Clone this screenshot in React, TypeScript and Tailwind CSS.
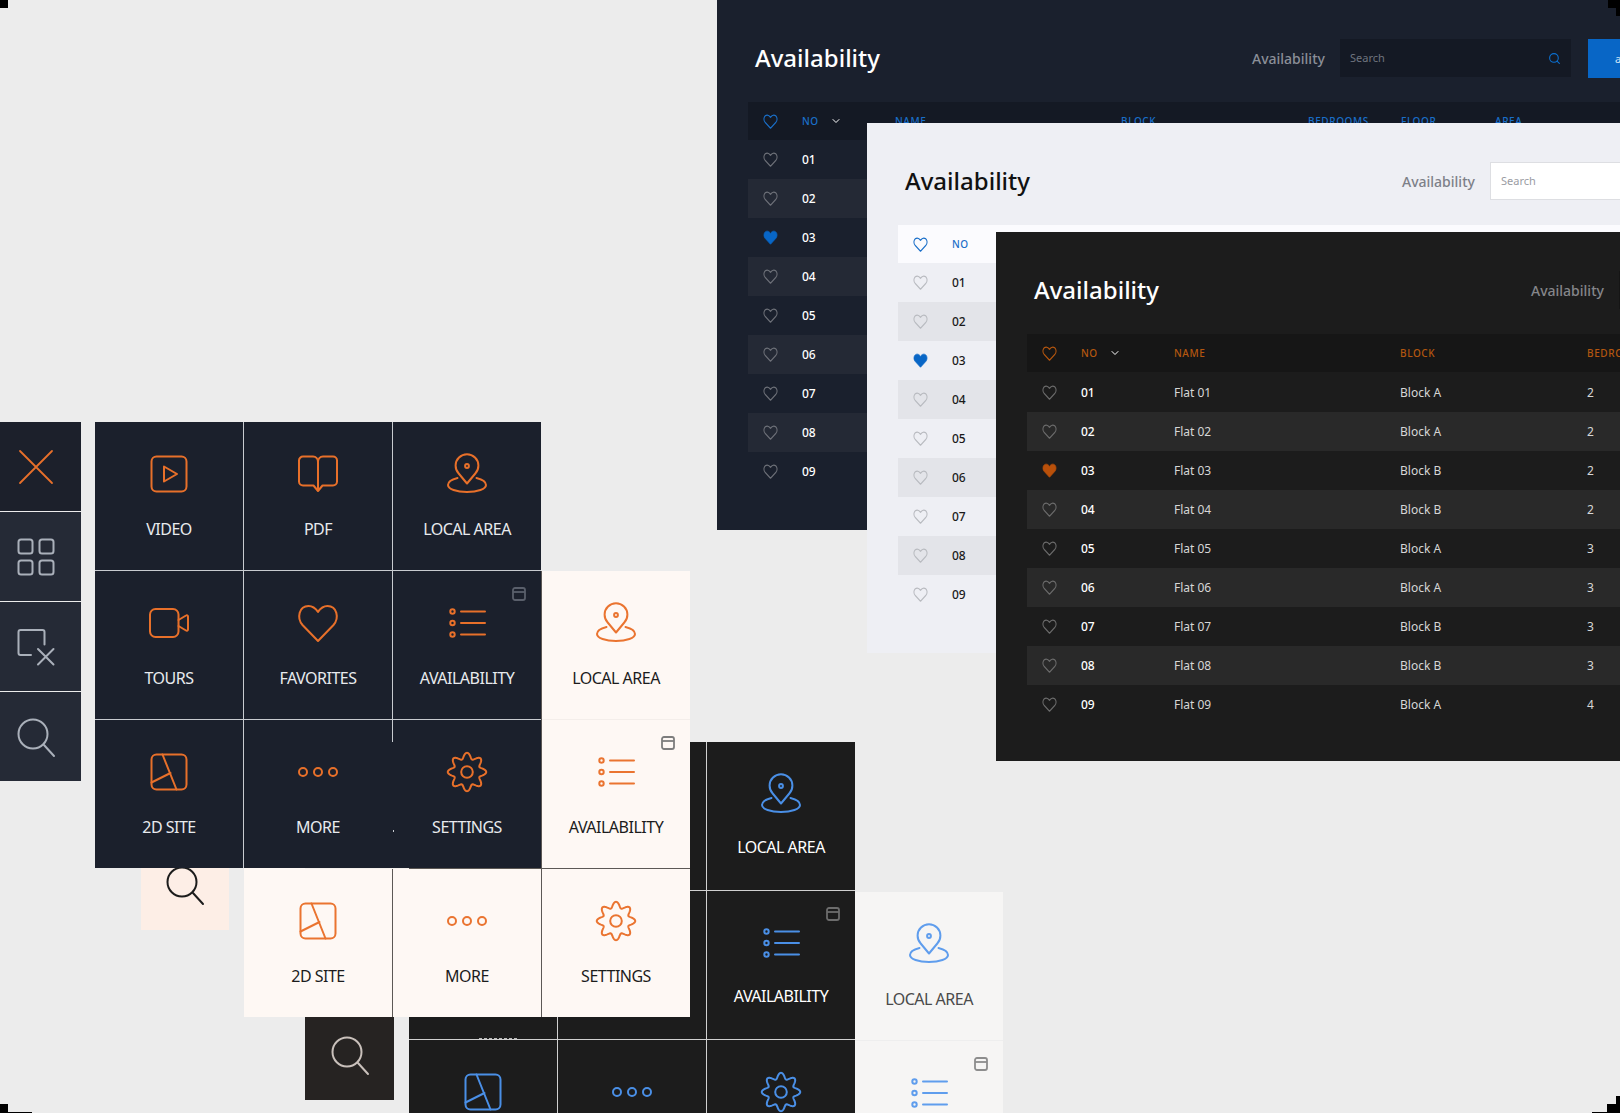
import React from "react";
import { Search, ChevronDown } from "lucide-react";

const FONT = "font-['Noto_Sans','Open_Sans',sans-serif]";

const gearPath = (() => {
  const pts: string[] = [];
  const n = 240;
  for (let i = 0; i < n; i++) {
    const t = (i / n) * Math.PI * 2;
    const r = 16.3 + 2.9 * Math.cos(8 * t);
    const x = 22 + r * Math.sin(t);
    const y = 22 - r * Math.cos(t);
    pts.push(`${i === 0 ? "M" : "L"}${x.toFixed(2)} ${y.toFixed(2)}`);
  }
  return pts.join(" ") + " Z";
})();

type IconName = "video" | "pdf" | "local" | "tours" | "heart" | "list" | "site" | "more" | "gear";

function Icon({ name }: { name: IconName }) {
  return (
    <svg width="44" height="44" viewBox="0 0 44 44" fill="none" stroke="currentColor" strokeWidth="2" strokeLinecap="round" strokeLinejoin="round">
      {name === "video" && (
        <>
          <rect x="4.5" y="4.5" width="35" height="35" rx="5" />
          <path d="M17 14.5 30 22 17 29.5Z" />
        </>
      )}
      {name === "pdf" && (
        <path d="M22 10c0-3-2-5.500-5-5.500H7a4 4 0 0 0-4 4V29.500a4 4 0 0 0 4 4h10.500L22 39l4.500-5.500H37a4 4 0 0 0 4-4V8.500a4 4 0 0 0-4-4H27c-3 0-5 2.500-5 5.500v26" />
      )}
      {name === "local" && (
        <>
          <path d="M22 31.500 13.700 21.500A11.400 11.400 0 1 1 30.300 21.500Z" />
          <circle cx="22" cy="14" r="1.900" />
          <path d="M12.500 26C6.500 27.500 3 30 3 33c0 4 8.500 7 19 7s19-3 19-7c0-3-3.500-5.500-9.500-7" />
        </>
      )}
      {name === "tours" && (
        <>
          <rect x="3" y="8" width="28.500" height="28" rx="5.500" />
          <path d="M31.500 19 39 14.500a1.300 1.300 0 0 1 2 1V28.500a1.300 1.300 0 0 1-2 1L31.500 25" />
        </>
      )}
      {name === "heart" && (
        <path d="M22 40 6.500 24C.5 17 3 5 12.500 5 17 5 20 8 22 11c2-3 5-6 9.500-6C41 5 43.500 17 37.500 24Z" />
      )}
      {name === "list" && (
        <>
          <circle cx="7.500" cy="10.500" r="2.200" />
          <circle cx="7.500" cy="22" r="2.200" />
          <circle cx="7.500" cy="33.500" r="2.200" />
          <path d="M16 10.500H40M16 22H40M16 33.500H40" />
        </>
      )}
      {name === "site" && (
        <>
          <rect x="4.500" y="4.500" width="35" height="35" rx="5" />
          <path d="M15.500 4.500 29.500 39.500M4.500 32.500 23.500 23" />
        </>
      )}
      {name === "more" && (
        <>
          <circle cx="7" cy="22" r="4" />
          <circle cx="22" cy="22" r="4" />
          <circle cx="37" cy="22" r="4" />
        </>
      )}
      {name === "gear" && (
        <>
          <path d={gearPath} />
          <circle cx="22" cy="22" r="5.800" />
        </>
      )}
    </svg>
  );
}

const CELLS: { label: string; icon: IconName; badge?: boolean }[] = [
  { label: "VIDEO", icon: "video" },
  { label: "PDF", icon: "pdf" },
  { label: "LOCAL AREA", icon: "local" },
  { label: "TOURS", icon: "tours" },
  { label: "FAVORITES", icon: "heart" },
  { label: "AVAILABILITY", icon: "list", badge: true },
  { label: "2D SITE", icon: "site" },
  { label: "MORE", icon: "more" },
  { label: "SETTINGS", icon: "gear" },
];

type GridTheme = { pos: string; line: string; cell: string; label: string; icon: string; badge: string };

function MenuGrid({ t }: { t: GridTheme }) {
  return (
    <div className={`absolute ${t.pos} ${t.line} grid grid-cols-[148px_148px_148px] grid-rows-[148px_148px_148px] gap-px`}>
      {CELLS.map((c) => (
        <div key={c.label} className={`relative flex flex-col items-center pt-[30px] ${t.cell}`}>
          <span className={t.icon}>
            <Icon name={c.icon} />
          </span>
          <span className={`text-[16px] tracking-[-0.5px] leading-[22px] ${t.label}`}>{c.label}</span>
          {c.badge && (
            <svg className={`absolute right-[15px] top-[16px] ${t.badge}`} width="14" height="14" viewBox="0 0 14 14" fill="none" stroke="currentColor" strokeWidth="1.800">
              <rect x="1" y="1" width="12" height="12" rx="2" />
              <path d="M1 5H13" />
            </svg>
          )}
        </div>
      ))}
    </div>
  );
}

function SearchGlyph() {
  return (
    <svg width="44" height="44" viewBox="0 0 44 44" fill="none" stroke="currentColor" strokeWidth="2" strokeLinecap="round">
      <circle cx="19" cy="19" r="14.500" />
      <path d="M30 30 40 41" />
    </svg>
  );
}

function RailButton({ className, children }: { className: string; children: React.ReactNode }) {
  return <div className={`flex items-center justify-center ${className}`}>{children}</div>;
}

function Rail() {
  return (
    <div className="absolute left-0 top-[422px] z-40 w-[81px] flex flex-col text-[#aab0ba]">
      <RailButton className="h-[89px] bg-[#1c202b] pr-[9px] mb-px text-[#e8702a]">
        <svg width="44" height="44" viewBox="0 0 44 44" fill="none" stroke="currentColor" strokeWidth="1.800" strokeLinecap="round">
          <path d="M6 6 38 38M38 6 6 38" />
        </svg>
      </RailButton>
      <RailButton className="h-[89px] bg-[#252a36] pr-[9px] mb-px">
        <svg width="44" height="44" viewBox="0 0 44 44" fill="none" stroke="currentColor" strokeWidth="2">
          <rect x="4.500" y="4.500" width="14" height="14" rx="2.500" />
          <rect x="25.500" y="4.500" width="14" height="14" rx="2.500" />
          <rect x="4.500" y="25.500" width="14" height="14" rx="2.500" />
          <rect x="25.500" y="25.500" width="14" height="14" rx="2.500" />
        </svg>
      </RailButton>
      <RailButton className="h-[89px] bg-[#252a36] pr-[9px] mb-px">
        <svg width="44" height="44" viewBox="0 0 44 44" fill="none" stroke="currentColor" strokeWidth="2" strokeLinecap="round" strokeLinejoin="round">
          <path d="M30.500 19.500V7a2 2 0 0 0-2-2H6.500a2 2 0 0 0-2 2v21a2 2 0 0 0 2 2H17" />
          <path d="M24 24 39.500 39.500M39.500 24 24 39.500" />
        </svg>
      </RailButton>
      <RailButton className="h-[89px] bg-[#252a36] pr-[9px]">
        <SearchGlyph />
      </RailButton>
    </div>
  );
}

function Heart({ filled }: { filled?: boolean }) {
  return (
    <svg width="15" height="15" viewBox="0 0 44 40" preserveAspectRatio="none" fill={filled ? "currentColor" : "none"} stroke="currentColor" strokeWidth={filled ? 2 : 3} strokeLinejoin="round">
      <path d="M22 38 6 22C0 15 3 3 12.500 3 17 3 20 6 22 9c2-3 5-6 9.500-6C41 3 44 15 38 22Z" />
    </svg>
  );
}

const ROWS = [
  ["01", "Flat 01", "Block A", "2"],
  ["02", "Flat 02", "Block A", "2"],
  ["03", "Flat 03", "Block B", "2"],
  ["04", "Flat 04", "Block B", "2"],
  ["05", "Flat 05", "Block A", "3"],
  ["06", "Flat 06", "Block A", "3"],
  ["07", "Flat 07", "Block B", "3"],
  ["08", "Flat 08", "Block B", "3"],
  ["09", "Flat 09", "Block A", "4"],
];

const GRID = "grid grid-cols-[39px_93px_226px_187px_93px_94px_120px] items-center pl-[15px]";

type PanelTheme = {
  pos: string;
  bg: string;
  title: string;
  sub: string;
  input: string;
  placeholder: string;
  head: string;
  headText: string;
  stripe: string;
  no: string;
  cell: string;
  heart: string;
  on: string;
  chevron: string;
  rows: string;
};

function Panel({ t }: { t: PanelTheme }) {
  return (
    <section className={`absolute ${t.pos} ${t.bg} w-[1000px] pt-[39px]`}>
      <div className="flex items-center h-[38px] pl-[38px]">
        <h1 className={`w-[497px] text-[24px] leading-[32px] font-medium ${t.title}`}>Availability</h1>
        <span className={`w-[88px] text-[14px] font-medium ${t.sub}`}>Availability</span>
        <div className={`flex items-center justify-between w-[231px] h-[38px] pl-[10px] pr-[10px] ${t.input}`}>
          <span className={`text-[11px] ${t.placeholder}`}>Search</span>
          <Search size={13} className="text-[#0b6fd0]" />
        </div>
        <div className="ml-[17px] w-[120px] h-[39px] pl-[27px] bg-[#0866c6] text-[11px] leading-[39px] text-[#cfe2f7]">add</div>
      </div>
      <div className="ml-[31px] mt-[25px]">
        <div className={`${GRID} h-[38px] ${t.head}`}>
          <span className={`w-[15px] ${t.headText}`}>
            <Heart />
          </span>
          <span className={`flex items-center text-[10px] font-medium tracking-[0.6px] ${t.headText}`}>
            NO
            <ChevronDown size={12} className={`ml-[11px] ${t.chevron}`} />
          </span>
          {["NAME", "BLOCK", "BEDROOMS", "FLOOR", "AREA"].map((h) => (
            <span key={h} className={`text-[10px] font-medium tracking-[0.6px] ${t.headText}`}>
              {h}
            </span>
          ))}
        </div>
        <div className={t.rows}>
          {ROWS.map((r, i) => (
            <div key={r[0]} className={`${GRID} h-[39px] ${i % 2 === 1 ? t.stripe : ""}`}>
              <span className={`w-[15px] ${i === 2 ? t.on : t.heart}`}>
                <Heart filled={i === 2} />
              </span>
              <span className={`text-[12px] font-medium ${t.no}`}>{r[0]}</span>
              <span className={`text-[12px] ${t.cell}`}>{r[1]}</span>
              <span className={`text-[12px] ${t.cell}`}>{r[2]}</span>
              <span className={`text-[12px] ${t.cell}`}>{r[3]}</span>
            </div>
          ))}
        </div>
      </div>
    </section>
  );
}

export default function App() {
  return (
    <div className={`relative w-[1620px] h-[1113px] overflow-hidden bg-[#ececec] ${FONT}`}>
      <Panel
        t={{
          pos: "left-[717px] top-0 h-[530px] z-10",
          bg: "bg-[#1a202d]",
          title: "text-white",
          sub: "text-[#8b8f98]",
          input: "bg-[#141924]",
          placeholder: "text-[#6f747e]",
          head: "bg-[#141924]",
          headText: "text-[#1a6fc9]",
          stripe: "bg-[#242935]",
          no: "text-white",
          cell: "text-[#d8d8d8]",
          heart: "text-[#6d7078]",
          on: "text-[#0866c6]",
          chevron: "text-white",
          rows: "",
        }}
      />
      <Panel
        t={{
          pos: "left-[867px] top-[123px] h-[530px] z-20",
          bg: "bg-[#eeeff4]",
          title: "text-[#111111]",
          sub: "text-[#7d8088]",
          input: "bg-white border border-[#dddee2]",
          placeholder: "text-[#9a9ca3]",
          head: "bg-[#fbfbfe]",
          headText: "text-[#1a6fc9]",
          stripe: "bg-[#e3e4e9]",
          no: "text-[#1a1a1a]",
          cell: "text-[#333333]",
          heart: "text-[#b9bbc0]",
          on: "text-[#0866c6]",
          chevron: "hidden",
          rows: "",
        }}
      />
      <Panel
        t={{
          pos: "left-[996px] top-[232px] h-[529px] z-30",
          bg: "bg-[#1c1c1c]",
          title: "text-white",
          sub: "text-[#85868a]",
          input: "bg-[#151515]",
          placeholder: "text-[#6f6f6f]",
          head: "bg-[#161616]",
          headText: "text-[#b4560f]",
          stripe: "bg-[#292929]",
          no: "text-white",
          cell: "text-[#d6d6d6]",
          heart: "text-[#6b6b6b]",
          on: "text-[#b9500a]",
          chevron: "text-white",
          rows: "mt-px",
        }}
      />

      <div className="z-[1] relative">
        <MenuGrid
          t={{
            pos: "left-[557px] top-[892px]",
            line: "bg-[#eeeeee]",
            cell: "bg-[#f6f5f4]",
            label: "mt-[22px] text-[#4a4a4a]",
            icon: "text-[#5f9ded]",
            badge: "text-[#8d8d8d]",
          }}
        />
        <MenuGrid
          t={{
            pos: "left-[409px] top-[742px]",
            line: "bg-[#d0d0d0]",
            cell: "bg-[#1c1c1c]",
            label: "mt-[20px] text-white",
            icon: "text-[#4a8fe6]",
            badge: "text-[#6c6c6c]",
          }}
        />
        <div className="absolute left-[479px] top-[1038px] w-[38px] border-t border-dashed border-[#bbbbbb]" />
        <RailButton className="absolute left-[305px] top-[1010px] w-[89px] h-[90px] bg-[#262322] text-[#c9c0bb]">
          <SearchGlyph />
        </RailButton>
        <RailButton className="absolute left-[141px] top-[840px] w-[88px] h-[90px] bg-[#fdeee6] text-[#1c1c1c]">
          <SearchGlyph />
        </RailButton>
        <MenuGrid
          t={{
            pos: "left-[244px] top-[571px]",
            line: "bg-[#5c5855]",
            cell: "bg-[#fef8f4]",
            label: "mt-[22px] text-[#1c1c1c]",
            icon: "text-[#ea7430]",
            badge: "text-[#7d7d7d]",
          }}
        />
        <div className="absolute left-[542px] top-[719px] w-[148px] h-px bg-[#f4eeea]" />
        <div className="absolute left-[244px] top-[868px] w-[165px] h-px bg-[#fef8f4]" />
        <MenuGrid
          t={{
            pos: "left-[95px] top-[422px]",
            line: "bg-[#c8cbd0]",
            cell: "bg-[#1b202c]",
            label: "mt-[22px] text-[#e8eaee]",
            icon: "text-[#e8702a]",
            badge: "text-[#5a5f6b]",
          }}
        />
        <div className="absolute left-[392px] top-[742px] w-[2px] h-[127px] bg-[#1b202c]" />
        <div className="absolute left-[393px] top-[830px] w-px h-[2px] bg-[#c8cbd0]" />
        <div className="absolute left-[165px] top-[719px] w-[38px] border-t border-dashed border-[#c8cbd0]" />
        <div className="absolute left-[305px] top-[868px] w-[104px] h-px bg-[#f4f0ec]" />
      </div>

      <Rail />

      <div className="absolute z-50 left-0 top-0 w-[8px] h-[8px] bg-black" />
      <div className="absolute z-50 left-[1608px] top-0 w-[12px] h-[8px] bg-black" />
      <div className="absolute z-50 left-[1616px] top-[8px] w-[4px] h-[8px] bg-black" />
      <div className="absolute z-50 left-0 top-[1104px] w-[8px] h-[9px] bg-black" />
      <div className="absolute z-50 left-0 top-[1112px] w-[32px] h-px bg-black" />
      <div className="absolute z-50 left-[1616px] top-[1096px] w-[4px] h-[17px] bg-black" />
      <div className="absolute z-50 left-[1607px] top-[1104px] w-[13px] h-[9px] bg-black" />
      <div className="absolute z-50 left-[1592px] top-[1112px] w-[28px] h-px bg-black" />
    </div>
  );
}
